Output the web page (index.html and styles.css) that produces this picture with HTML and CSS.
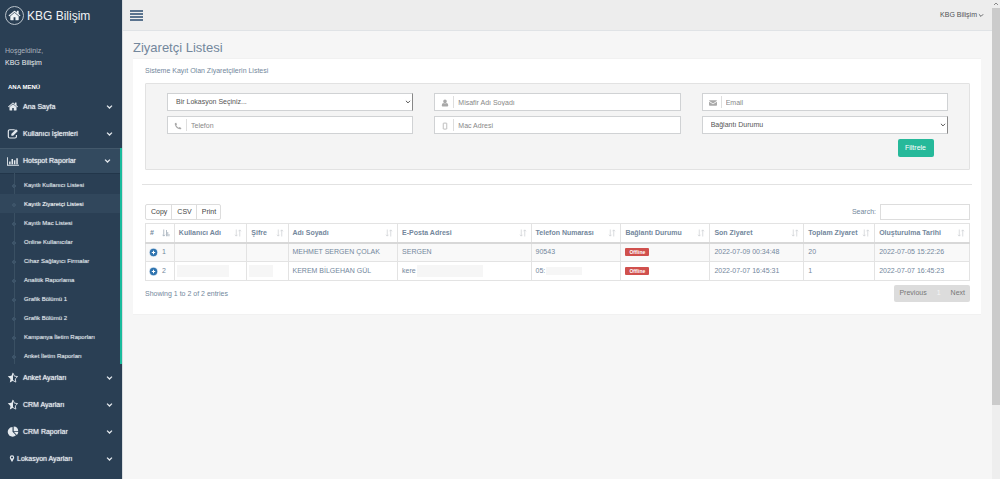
FILE: index.html
```html
<!DOCTYPE html>
<html lang="tr">
<head>
<meta charset="utf-8">
<title>Ziyaretçi Listesi</title>
<link rel="stylesheet" href="styles.css">
</head>
<body>
<svg class="sprite" aria-hidden="true">
  <symbol id="home" viewBox="0 0 1792 1792"><path d="M1472 992v480q0 26-19 45t-45 19h-384v-384h-256v384h-384q-26 0-45-19t-19-45v-480q0-1 .5-3t.5-3l575-474 575 474q1 2 1 6zm223-69l-62 74q-8 9-21 11h-3q-13 0-21-7l-692-577-692 577q-12 8-24 7-13-2-21-11l-62-74q-8-10-7-23.5t11-21.5l719-599q32-26 76-26t76 26l244 204v-195q0-14 9-23t23-9h192q14 0 23 9t9 23v408l219 182q10 8 11 21.5t-7 23.5z"/></symbol>
  <symbol id="edit" viewBox="0 0 16 16"><path d="M10.5 2.5H3.4Q1.2 2.5 1.2 4.700V12.300Q1.200 14.500 3.400 14.500H10.800Q13 14.500 13 12.300V10" fill="none" stroke="currentColor" stroke-width="1.700"/><path d="M5.500 8.600 12.400 1.700l2.700 2.700-6.900 6.900H5.500z"/></symbol>
  <symbol id="chart" viewBox="0 0 20 16"><path d="M0 1h1.500v12.500H20V15H0zM3.500 8H6v4.500H3.500zM7.500 4H10v8.500H7.500zM11.500 6H14v6.500h-2.500zM15.500 2.500H18v10h-2.500z"/></symbol>
  <symbol id="star" viewBox="0 0 16 16"><path d="M8 .5 5.700 5.400.4 6.200l3.900 3.800-.9 5.400L8 12.800z"/><path d="M8 1.500l2 4.500 4.700.7-3.400 3.300.8 4.700L8 12.400" fill="none" stroke="currentColor" stroke-width="1.300"/></symbol>
  <symbol id="pie" viewBox="0 0 16 16"><path d="M7.300 1.500V8.500l5 5A7 7 0 1 1 7.300 1.500zM9 .8A6.800 6.800 0 0 1 15.600 7.500H9zM9.500 8.800h6.200a6.500 6.500 0 0 1-2 4.300z"/></symbol>
  <symbol id="pin" viewBox="0 0 12 16"><path fill-rule="evenodd" d="M6 .5a5 5 0 0 1 5 5c0 1.300-.4 2-.8 2.900L6.900 15q-.9 1.200-1.800 0L1.800 8.400C1.400 7.500 1 6.800 1 5.500a5 5 0 0 1 5-5zM6 3.200a2.400 2.400 0 1 0 0 4.800 2.400 2.400 0 0 0 0-4.800z"/></symbol>
  <symbol id="down" viewBox="0 0 10 8"><path d="M1.500 2 5 5.500 8.500 2" fill="none" stroke="currentColor" stroke-width="1.900"/></symbol>
  <symbol id="thin-down" viewBox="0 0 10 8"><path d="M1.500 2 5 5.500 8.500 2" fill="none" stroke="currentColor" stroke-width="1.500"/></symbol>
  <symbol id="user" viewBox="0 0 16 16"><path d="M8 1a3.600 3.600 0 0 1 3.600 3.600C11.600 7 10 8.800 8 8.800S4.400 7 4.400 4.600A3.600 3.600 0 0 1 8 1zM4.600 8Q8 11 11.400 8 14.500 8.500 14.500 13q0 2-2 2h-9q-2 0-2-2Q1.500 8.500 4.600 8z"/></symbol>
  <symbol id="mail" viewBox="0 0 16 16"><path d="M1.500 2.500h13q1.500 0 1.500 1.200L8 9 0 3.700Q0 2.500 1.500 2.500zM0 5.500l8 5.200 8-5.200V12q0 1.500-1.500 1.500h-13Q0 13.500 0 12z"/></symbol>
  <symbol id="phone" viewBox="0 0 16 16"><path d="M2.500 2 4.500 1.700l1.500 3.300-1.500 1.700q1.800 3.500 5 5L11.200 10.200 14.500 11.800v1.700q-.7 1.200-2.500 1.200Q3.500 13.500 1.500 4.700 1.300 2.500 2.500 2z"/></symbol>
  <symbol id="mobile" viewBox="0 0 16 16"><path d="M5.500 2.200h5q1 0 1 1v10q0 1-1 1h-5q-1 0-1-1v-10q0-1 1-1z" fill="none" stroke="currentColor" stroke-width="1.500"/></symbol>
  <symbol id="sort" viewBox="0 0 16 16"><path d="M4.500 1v13M2 11.500l2.500 2.800L7 11.500M11.500 15V2M9 4.500l2.500-2.800L14 4.500" fill="none" stroke="currentColor" stroke-width="1.500"/></symbol>
  <symbol id="sort-asc" viewBox="0 0 16 16"><path d="M3.500 1v13M1 11.500l2.500 2.800L6 11.500M9 2v12.500M11.500 6v8.500M14 10v4.500" fill="none" stroke="currentColor" stroke-width="1.700"/></symbol>
  <symbol id="plus" viewBox="0 0 16 16"><circle cx="8" cy="8" r="8" fill="#d5e2ee"/><circle cx="8" cy="8" r="6.600" fill="#2f74af"/><path d="M8 5v6M5 8h6" stroke="#fff" stroke-width="1.800"/></symbol>
</svg>
<div class="app">
  <aside class="sidebar">
    <a class="brand" href="#"><span class="brand-mark"><svg><use href="#home"/></svg></span>KBG Bilişim</a>
    <div class="welcome"><span>Hoşgeldiniz,</span><strong>KBG Bilişim</strong></div>
    <h2 class="menu-title">ANA MENÜ</h2>
    <nav>
      <a class="item" href="#"><svg class="ico"><use href="#home"/></svg>Ana Sayfa<svg class="arrow"><use href="#down"/></svg></a>
      <a class="item" href="#"><svg class="ico"><use href="#edit"/></svg>Kullanıcı İşlemleri<svg class="arrow"><use href="#down"/></svg></a>
      <div class="group">
        <a class="item open" href="#"><svg class="ico"><use href="#chart"/></svg>Hotspot Raporlar<svg class="arrow"><use href="#down"/></svg></a>
        <ul class="submenu">
          <li><a href="#">Kayıtlı Kullanıcı Listesi</a></li>
          <li class="current"><a href="#">Kayıtlı Ziyaretçi Listesi</a></li>
          <li><a href="#">Kayıtlı Mac Listesi</a></li>
          <li><a href="#">Online Kullanıcılar</a></li>
          <li><a href="#">Cihaz Sağlayıcı Firmalar</a></li>
          <li><a href="#">Analitik Raporlama</a></li>
          <li><a href="#">Grafik Bölümü 1</a></li>
          <li><a href="#">Grafik Bölümü 2</a></li>
          <li><a href="#">Kampanya İletim Raporları</a></li>
          <li><a href="#">Anket İletim Raporları</a></li>
        </ul>
      </div>
      <a class="item" href="#"><svg class="ico"><use href="#star"/></svg>Anket Ayarları<svg class="arrow"><use href="#down"/></svg></a>
      <a class="item" href="#"><svg class="ico"><use href="#star"/></svg>CRM Ayarları<svg class="arrow"><use href="#down"/></svg></a>
      <a class="item" href="#"><svg class="ico"><use href="#pie"/></svg>CRM Raporlar<svg class="arrow"><use href="#down"/></svg></a>
      <a class="item compact" href="#"><svg class="ico"><use href="#pin"/></svg>Lokasyon Ayarları<svg class="arrow"><use href="#down"/></svg></a>
    </nav>
  </aside>
  <div class="main">
    <header class="topbar">
      <button class="burger" type="button" aria-label="Menü"><i></i><i></i><i></i><i></i></button>
      <button class="account" type="button">KBG Bilişim<svg><use href="#thin-down"/></svg></button>
    </header>
    <main class="content">
      <h1>Ziyaretçi Listesi</h1>
      <section class="panel">
        <p class="subtitle">Sisteme Kayıt Olan Ziyaretçilerin Listesi</p>
        <form class="filters">
          <div class="field pick"><select aria-label="Lokasyon"><option>Bir Lokasyon Seçiniz...</option></select><svg><use href="#thin-down"/></svg></div>
          <label class="field"><svg><use href="#user"/></svg><input type="text" placeholder="Misafir Adı Soyadı" aria-label="Misafir Adı Soyadı"></label>
          <label class="field"><svg><use href="#mail"/></svg><input type="text" placeholder="Email" aria-label="Email"></label>
          <label class="field"><svg><use href="#phone"/></svg><input type="text" placeholder="Telefon" aria-label="Telefon"></label>
          <label class="field"><svg><use href="#mobile"/></svg><input type="text" placeholder="Mac Adresi" aria-label="Mac Adresi"></label>
          <div class="field pick"><select aria-label="Bağlantı Durumu"><option>Bağlantı Durumu</option></select><svg><use href="#thin-down"/></svg></div>
          <button class="submit" type="button">Filtrele</button>
        </form>
        <hr>
        <div class="tools">
          <div class="exports"><button type="button">Copy</button><button type="button">CSV</button><button type="button">Print</button></div>
          <label class="search">Search: <input type="search"></label>
        </div>
        <table>
          <colgroup><col class="c-num"><col class="c-user"><col class="c-pass"><col class="c-name"><col class="c-mail"><col class="c-tel"><col class="c-state"><col class="c-last"><col class="c-total"><col class="c-date"></colgroup>
          <thead><tr>
            <th class="sorted"><div>#<svg><use href="#sort-asc"/></svg></div></th>
            <th><div>Kullanıcı Adı<svg><use href="#sort"/></svg></div></th>
            <th><div>Şifre<svg><use href="#sort"/></svg></div></th>
            <th><div>Adı Soyadı<svg><use href="#sort"/></svg></div></th>
            <th><div>E-Posta Adresi<svg><use href="#sort"/></svg></div></th>
            <th><div>Telefon Numarası<svg><use href="#sort"/></svg></div></th>
            <th><div>Bağlantı Durumu<svg><use href="#sort"/></svg></div></th>
            <th><div>Son Ziyaret<svg><use href="#sort"/></svg></div></th>
            <th><div>Toplam Ziyaret<svg><use href="#sort"/></svg></div></th>
            <th><div>Oluşturulma Tarihi<svg><use href="#sort"/></svg></div></th>
          </tr></thead>
          <tbody>
            <tr><td><div class="num"><svg><use href="#plus"/></svg>1</div></td><td></td><td></td><td>MEHMET SERGEN ÇOLAK</td><td>SERGEN</td><td>90543</td><td><span class="badge">Offline</span></td><td>2022-07-09 00:34:48</td><td>20</td><td>2022-07-05 15:22:26</td></tr>
            <tr><td><div class="num"><svg><use href="#plus"/></svg>2</div></td><td class="masked"><div><span class="mask w-user"></span></div></td><td class="masked"><div><span class="mask w-pass"></span></div></td><td>KEREM BİLGEHAN GÜL</td><td><div class="part">kere<span class="mask w-mail"></span></div></td><td><div class="part">05:<span class="mask w-tel"></span></div></td><td><span class="badge">Offline</span></td><td>2022-07-07 16:45:31</td><td>1</td><td>2022-07-07 16:45:23</td></tr>
          </tbody>
        </table>
        <div class="foot">
          <span>Showing 1 to 2 of 2 entries</span>
          <div class="pager"><button type="button">Previous</button><button type="button" class="on">1</button><button type="button">Next</button></div>
        </div>
      </section>
    </main>
  </div>
  <div class="scroll"><svg viewBox="0 0 8 8"><path d="M2 5l2-2 2 2" fill="none" stroke="#8a8a8a"/></svg><div class="thumb"></div></div>
</div>
</body>
</html>
```
FILE: styles.css
```css
* { box-sizing: border-box; }
body { margin: 0; font: 7px/10px "Liberation Sans", Arial, sans-serif; color: #73879c; background: #f6f6f6; }
a { color: inherit; text-decoration: none; }
button, input, select { font: inherit; color: inherit; margin: 0; padding: 0; border: 0; background: none; }
svg { display: block; fill: currentColor; flex: none; }
.sprite { display: none; }
.app { display: flex; min-height: 100vh; }

.sidebar { flex: 0 0 122px; background: #2a3f54; color: #e4e9ee; }
.brand { display: flex; align-items: center; gap: 3px; height: 31px; padding-left: 5px; font-size: 12px; color: #f0f3f5; white-space: nowrap; }
.brand-mark { display: grid; place-items: center; width: 19px; height: 19px; border: 1px solid #b9c2ca; border-radius: 50%; }
.brand-mark svg { width: 13px; height: 13px; }
.welcome { display: grid; gap: 2px; padding: 15px 5px 0; color: #aab4be; }
.welcome strong { font-weight: 400; color: #ecf0f1; }
.menu-title { margin: 14px 8px 1px; font-size: 6px; line-height: 10px; font-weight: 700; color: #fff; }
.item { display: flex; align-items: center; gap: 4px; height: 27px; padding: 0 9px 0 7px; text-shadow: 0 0 1px #e4e9ee; }
.ico { width: 12px; height: 11px; }
.arrow { width: 7px; height: 6px; margin-left: auto; }
.compact { gap: 0; }
.compact .ico { width: 10px; height: 7px; }
.group { border-right: 2px solid #1abb9c; }
.open { height: 25px; margin-top: 1px; background: #334a5f; border-top: 1px solid #43586b; box-shadow: 0 1px #22364a; }
.submenu { list-style: none; margin: 0; padding: 2px 0 0; background: linear-gradient(#3a5063, #3a5063) 14px 0 / 1px 100% no-repeat; font-size: 6px; }
.submenu li { height: 19px; padding: 5px 0 0 24px; white-space: nowrap; background: radial-gradient(circle at 14px 11px, #3d5469 2px, transparent 2px); }
.submenu li:last-child { height: 18px; }
.submenu a { text-shadow: 0 0 1px #9aa7b3; }
.submenu .current { color: #fff; background-color: #31475c; }

.main { flex: 1; min-width: 0; border-left: 1px solid #d9dde0; }
.topbar { display: flex; align-items: center; justify-content: space-between; height: 31px; padding: 0 8px 0 7px; background: #ededed; border-bottom: 1px solid #e0e3e6; }
.burger { display: grid; gap: 1px; width: 13px; }
.burger i { height: 2px; background: #5a738e; }
.account { display: flex; align-items: center; gap: 1px; color: #515356; }
.account svg { width: 6px; height: 5px; }
.content { padding: 9px 11px 9px 10px; }
h1 { margin: 0 0 3px; font-size: 13px; line-height: 15px; font-weight: 400; }
.panel { padding: 7px 11px 12px 12px; background: #fff; border: 1px solid #f1f1f1; border-width: 1px 0; }
.subtitle { margin: 0 0 7px; }
.filters { display: grid; grid-template-columns: repeat(3, 1fr); gap: 5px 21px; padding: 9px 21px 12px; background: #f4f4f4; border: 1px solid #e2e2e2; border-radius: 1px; color: #666; }
.field { display: flex; align-items: center; height: 18px; background: #fff; border: 1px solid #d0d2d4; }
.field > svg { width: 8px; height: 8px; margin: 2px 4px 0 6px; color: #a9a9a9; }
.field input { flex: 1; min-width: 0; height: 12px; padding-left: 4px; border-left: 1px solid #dedede; outline: 0; }
.field input::placeholder { color: #888; opacity: 1; }
.pick { border-right-color: #888; }
.pick select { flex: 1; appearance: none; height: 16px; padding-left: 8px; color: #555; }
.pick > svg { width: 6px; height: 6px; margin: 0 1px; color: #444; }
.submit { grid-column: 3; justify-self: end; margin-right: 14px; padding: 4px 8px 4px 7px; background: #26b99a; border-radius: 2px; color: #fff; }
hr { margin: 14px -2px 19px -3px; border: 0; border-top: 1px solid #e2e2e2; }
.tools { display: flex; justify-content: space-between; align-items: center; }
.exports { display: flex; border: 1px solid #ddd; border-radius: 2px; color: #444; }
.exports button { padding: 2px 4px 3px 5px; height: 14px; }
.exports button + button { border-left: 1px solid #ddd; }
.search { display: flex; align-items: center; gap: 4px; }
.search input { width: 90px; height: 16px; border: 1px solid #ddd; }

table { width: 100%; margin: 3px 0 4px; table-layout: fixed; border-collapse: collapse; border: 1px solid #ddd; white-space: nowrap; }
.c-num { width: 3.5%; } .c-user { width: 8.8%; } .c-pass { width: 5%; } .c-name { width: 13.3%; } .c-mail { width: 16.2%; }
.c-tel { width: 10.9%; } .c-state { width: 10.8%; } .c-last { width: 11.4%; } .c-total { width: 8.6%; } .c-date { width: 11.5%; }
th, td { height: 19px; padding: 0 4px; border: 1px solid #e3e3e3; text-align: left; }
th { border-bottom: 2px solid #d8d8d8; }
th div { display: flex; align-items: center; justify-content: space-between; }
th svg { width: 8px; height: 8px; color: #cdd0d4; }
.sorted svg { color: #a8b2bd; }
tbody tr:first-child { background: #f9f9f9; }
.num { display: flex; align-items: center; gap: 4px; margin-left: -1px; }
.num svg { width: 9px; height: 9px; }
.part { display: flex; align-items: center; gap: 1px; }
.masked { padding: 0 2px; }
.mask { display: block; height: 12px; background: #f6f6f6; }
.w-user { width: 52px; } .w-pass { width: 24px; } .w-mail { width: 66px; } .w-tel { width: 36px; height: 8px; }
.badge { display: inline-block; padding: 0 4px; background: #d0504d; border-radius: 1px; color: #fff; font-size: 5px; line-height: 8px; font-weight: 700; }
.foot { display: flex; justify-content: space-between; align-items: center; }
.pager { display: flex; background: #dcdcdc; border-radius: 2px; color: #777; }
.pager button { padding: 3px 5px 4px; }
.pager .on { color: #f5f5f5; }

.scroll { flex: 0 0 8px; background: #eee; }
.scroll svg { width: 8px; height: 8px; }
.thumb { height: 397px; background: #cbcbcb; }
```
